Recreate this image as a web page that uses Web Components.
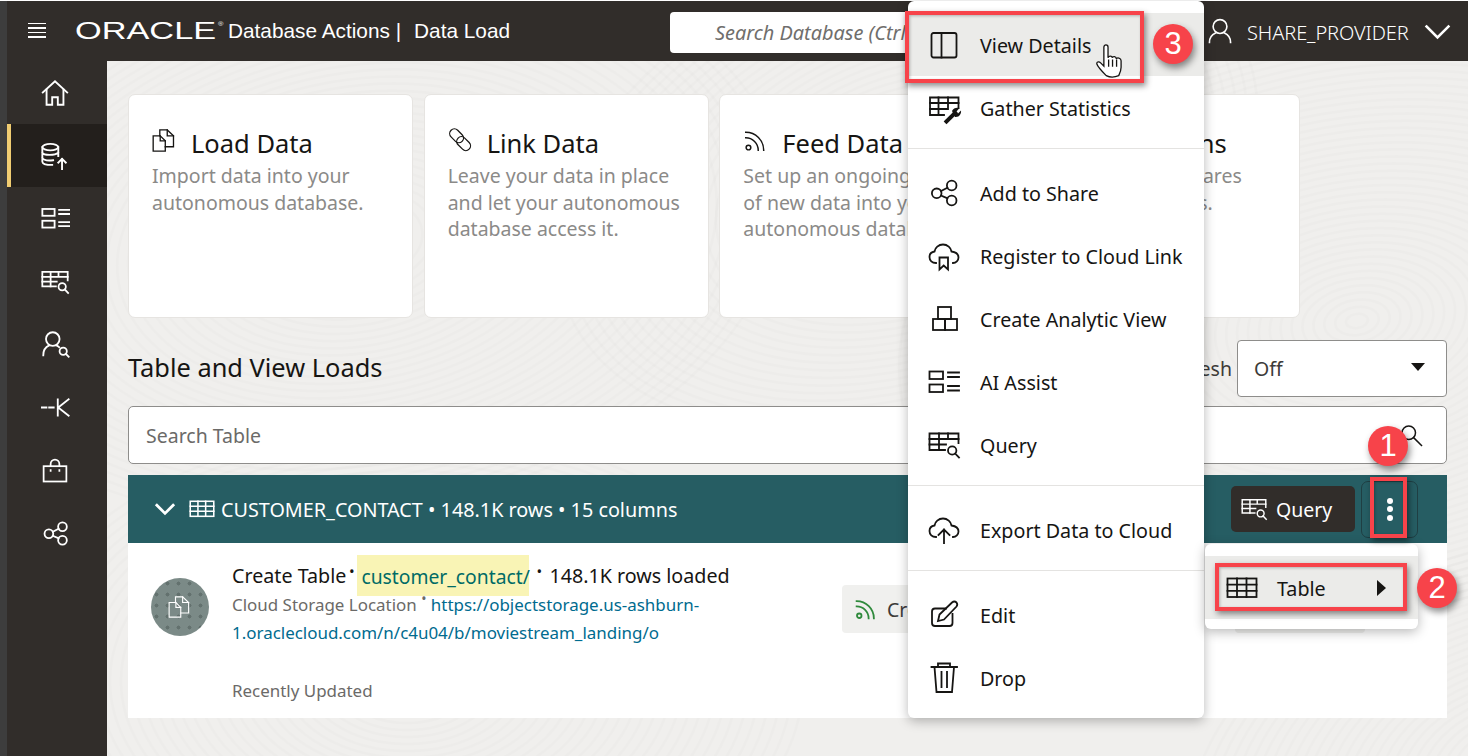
<!DOCTYPE html>
<html lang="en"><head><meta charset="utf-8"><title>Data Load</title>
<style>
html,body{margin:0;height:756px;overflow:hidden;background:#3d3d3d}
body{font-family:"Noto Sans","Open Sans",sans-serif;color:#161513}
</style></head>
<body>
<app-shell></app-shell>
<script>
const CLOUD='M8 23C4 23 1.5 20.5 1.5 17C1.5 14 3.5 12 6.5 11.5C7 8 10.5 4.5 15 4.5C19.5 4.5 23 8 23.5 11.5C27 12 30.5 14 30.5 17.5C30.5 20.5 28 23 25 23';
const ICONS={
 details:'<rect x="3.5" y="4" width="25" height="24.5" rx="2"/><path d="M13.5 4V28.5"/>',
 gather:'<path d="M16 23H2V5.5H30.5V16"/><path d="M2 11H30.5M2 17H20M10.5 5.5V23M20 5.5V17"/><path d="M18.500 29.500L27 21" stroke-width="4"/><path d="M24 19C25 16 29 15 31.500 16L28.500 19.500L30 21.500L33 18.500C33.500 21.500 31.500 25.500 27 25Z" fill="currentColor" stroke="none"/>',
 share:'<circle cx="8.7" cy="16.3" r="4.8"/><circle cx="23.7" cy="8.5" r="4.8"/><circle cx="23.7" cy="23.5" r="4.8"/><path d="M13 14L19.4 10.7M13 18.6L19.4 21.3"/>',
 cloudlink:'<path d="'+CLOUD+'"/><path d="M11.5 17.5H20V29.5L15.7 25.5L11.5 29.5Z"/>',
 analytic:'<rect x="10" y="4" width="13" height="12"/><rect x="5" y="16" width="12" height="11"/><rect x="17" y="16" width="12" height="11"/>',
 ai:'<rect x="1.5" y="5.5" width="13.5" height="7.5"/><rect x="1.5" y="18.5" width="13.5" height="7.5"/><path d="M20 6.5H31M20 11H31M20 20H31M20 24.5H31"/>',
 query:'<path d="M17 21H1.5V4.5H30.5V14"/><path d="M1.5 10H30.5M1.5 15.5H18M11 4.5V21M20 4.5V10"/><circle cx="24.2" cy="21.5" r="4.2"/><path d="M27.2 24.5L31 28.5"/>',
 cloudup:'<path d="'+CLOUD+'"/><path d="M16 29V15.5M10.5 21L16 15.5L21.5 21"/>',
 edit:'<path d="M18 9.5H7A3 3 0 0 0 4 12.5V24A3 3 0 0 0 7 27H21.500A3 3 0 0 0 24.500 24V15"/><path d="M10 22L11.500 15.500L24 3.500C25.500 2.200 27.500 2.500 28.500 3.500C29.500 4.800 29.500 6.200 28.500 7.500L16 20.500Z"/>',
 trash:'<path d="M3.500 5H29M10 5V1.500H22V5M6.500 5L8.500 30H24L26 5M13.500 10V25M19 10V25"/>',
 home:'<path d="M3 15.500L16 3.500L29 15.500"/><path d="M7 12.500V28.500H13V20.500H19V28.500H25V12.500"/>',
 db:'<ellipse cx="11" cy="6.500" rx="8.500" ry="3.500"/><path d="M2.500 6.500V22C2.500 24.500 7 25.500 13 25.500M19.500 6.500V16M2.500 12.500C4 15.500 16 15.500 19.500 12.500M2.500 18C4 21 10 21 14 20.500"/><path d="M23.500 30V19M19.500 23L23.500 19L27.500 23" stroke="#fff"/>',
 usersearch:'<circle cx="13" cy="10" r="7.500"/><path d="M2.500 28C2.500 22 5.500 18.500 9 17M17 17C18 17.500 19 18 20 19"/><circle cx="24.500" cy="23.500" r="4"/><path d="M27.500 26.500L30.500 29.500"/>',
 dashk:'<path d="M1 16H6M9 16H14M18.500 7V25M30.500 7L19 16L30.500 25"/>',
 bag:'<rect x="3" y="10.500" width="26" height="17.500"/><path d="M11 10.500V8A5 5 0 0 1 21 8V10.500"/><path d="M11 15V15.800M21 15V15.800"/>',
 doc:'<path d="M1.500 10H10.500L17 16.500V29.500H1.500Z"/><path d="M10 10V2.500H19.500L27.500 10V24H17"/><path d="M10.500 10V16.500H17M19.500 2.500V10H27.500"/>',
 link:'<rect x="-10" y="-6" width="20" height="12" rx="6" transform="translate(11 10) rotate(45)"/><rect x="-10" y="-6" width="20" height="12" rx="6" transform="translate(20 20) rotate(45)"/>',
 feed:'<path d="M3.500 5.500A23 23 0 0 1 26.500 28.500M3.500 12.500A16 16 0 0 1 19.500 28.500"/><circle cx="7" cy="25" r="3"/>',
 table:'<rect x="1.500" y="6.500" width="29" height="18.500"/><path d="M1.500 12.700H30.500M1.500 18.800H30.500M11 6.500V25M20.500 6.500V25"/>',
 user:'<circle cx="16" cy="10.500" r="8.500"/><path d="M3 30C3 24 6 20.500 10.500 18.500M29 30C29 24 26 20.500 21.500 18.500"/>',
 search:'<circle cx="13" cy="13" r="9"/><path d="M19.500 19.500L30 30"/>',
 chevron:'<path d="M3 10L16 23L29 10"/>',
 hand:'<path d="M12 30C9 27 5 23 4 20C4 18 6 18 7.500 19.500L10 22V6C10 3.500 13.500 3.500 13.500 6V15C14 13 17 13 17 15C17.500 13.500 20.500 13.500 20.500 16C21 14.500 24.500 15 24.500 17.500V23C24.500 26 23.500 28 22.500 30C19 31.500 15 31.500 12 30Z" fill="#fff"/><path d="M14 17V22M17.300 17V22M20.700 17V22"/>'
};
class XIcon extends HTMLElement{
 connectedCallback(){
  const s=this.getAttribute('size')||32,w=this.getAttribute('sw')||1.8;
  this.attachShadow({mode:'open'}).innerHTML=`<style>:host{display:inline-flex;flex:none;width:${s}px;height:${s}px}svg{display:block;overflow:visible}</style><svg width="${s}" height="${s}" viewBox="0 0 32 32" fill="none" stroke="currentColor" stroke-width="${w}" stroke-linecap="square">${ICONS[this.getAttribute('name')]||''}</svg>`;
 }
}
customElements.define('x-icon',XIcon);

function def(name,html){
 const t=document.createElement('template');t.innerHTML=html;
 customElements.define(name,class extends HTMLElement{
  constructor(){super();this.attachShadow({mode:'open'}).appendChild(t.content.cloneNode(true));}
 });
}

/* soft swirling paper texture of the workspace, as vector ellipses */
let swirl='';
[[250,180,13],[800,120,11],[1250,260,14],[300,620,12],[1400,700,10]].forEach(([x,y,n])=>{
 for(let i=1;i<=n*3;i++){swirl+=`<ellipse cx='${x}' cy='${y}' rx='${i*11}' ry='${i*7}' fill='none' stroke='%23000' stroke-opacity='.011' stroke-width='3' transform='rotate(${x%40-20} ${x} ${y})'/>`;}
});
const SWIRL=`url("data:image/svg+xml,<svg xmlns='http://www.w3.org/2000/svg' width='1361' height='696'>${swirl}</svg>")`;

def('app-header',`<style>
:host{display:flex;align-items:center;height:60px;background:#312d2a;color:#fff;flex:none;font-family:"Liberation Sans",sans-serif}
.burger{width:18px;height:15px;margin-left:21px;margin-top:-2px;display:flex;flex-direction:column;justify-content:space-between}
.burger i{display:block;height:1.500px;background:#fff}
.logo{margin-left:29px;width:139px;height:24px;font-size:23.500px;line-height:24px;transform:scaleX(1.46);transform-origin:0 50%;white-space:nowrap;position:relative;margin-top:-1px}
.r{position:absolute;left:98px;top:1px;font-size:5px;line-height:8px;}
.t{font-size:20.800px;white-space:nowrap;margin-top:-1px}
.t1{margin-left:14px;margin-right:13px}
.search{margin-left:160px;height:41px;background:#fff;border-radius:4px;color:#6f6e6c;font:italic 19.900px "Noto Sans",sans-serif;display:flex;align-items:center;padding-left:45px;flex:none;white-space:nowrap;overflow:hidden;width:400px;margin-top:3px}
.right{position:absolute;left:1205px;top:1px;height:60px;display:flex;align-items:center;font:300 20px "Noto Sans",sans-serif}
.u{margin-left:2px}.n{margin-left:14px;width:177px;letter-spacing:-.1px;padding-top:2px}
</style>
<div class="burger"><i></i><i></i><i></i><i></i></div>
<div class="logo">ORACLE<span class="r">®</span></div>
<div class="t t1">Database Actions |</div><div class="t">Data Load</div>
<div class="search">Search Database (Ctrl+K)</div>
<div class="right"><x-icon class="u" name="user" size="26" sw="2"></x-icon><span class="n">SHARE_PROVIDER</span><x-icon name="chevron" size="27" sw="3"></x-icon></div>`);

def('side-nav',`<style>
:host{display:flex;flex-direction:column;width:100px;background:#312d2a;color:#fff;flex:none;box-sizing:border-box}
</style><slot></slot>`);
def('nav-item',`<style>
:host{display:flex;height:63px;align-items:center;justify-content:center;box-sizing:border-box;color:#fff;padding-right:4px}
:host([active]){background:#231f1c;border-left:4px solid #f0cc71;padding-right:8px}
</style><slot></slot>`);

def('feature-card',`<style>
:host{display:block;width:285px;height:224px;box-sizing:border-box;background:#fff;border:1px solid #e6e4e1;border-radius:7px;padding:30px 20px 0 23px;flex:none}
.h{display:flex;align-items:center;height:36px;font-size:25.500px;color:#161513;gap:14px;white-space:nowrap}
.d{font-size:19.500px;line-height:26.500px;color:#8b8a88;white-space:nowrap;padding-top:2px}
::slotted(x-icon){margin-bottom:5px}
</style><div class="h"><slot name="icon"></slot><slot name="title"></slot></div><div class="d"><slot></slot></div>`);

def('section-head',`<style>
:host{display:flex;align-items:center;justify-content:space-between;height:57px;margin-top:22px}
.t{font-size:25.400px;margin-top:-4px}
.r{display:flex;align-items:center;gap:5px;font-size:19.500px;color:#3d3b39}
.sel{height:55px;border:1px solid #8e8d8b;border-radius:4px;background:#fff;display:flex;align-items:center;justify-content:space-between;padding:0 21px 0 16px;width:171px}
.sel i{border:7.500px solid transparent;border-top:8px solid #161513;border-bottom:0;margin-top:-4px}
</style><div class="t">Table and View Loads</div><div class="r">Auto Refresh<div class="sel">Off<i></i></div></div>`);

def('search-box',`<style>
:host{display:flex;align-items:center;justify-content:space-between;height:58px;box-sizing:border-box;margin-top:9px;background:#fff;border:1px solid #8e8d8b;border-radius:5px;padding:0 23px 0 17px;font-size:19.500px;color:#6b6a68}
x-icon{color:#161513}
</style>Search Table<x-icon name="search" size="24" sw="2"></x-icon>`);

def('table-bar',`<style>
:host{display:flex;align-items:center;height:68px;margin-top:11px;background:#265d63;color:#fff;font-size:19.800px;padding-left:27px;flex:none}
.c{margin-right:14px}.i{margin-right:6px}
.q{margin-left:auto;width:124px;height:46px;background:#312d2a;border-radius:5px;display:flex;align-items:center;padding-left:10px;box-sizing:border-box;gap:9px;font-size:19.500px}
.k{margin-left:6px;margin-right:29px;width:57px;height:57px;box-sizing:border-box;border:1px solid #1f3f43;border-radius:7px;display:flex;flex-direction:column;align-items:center;justify-content:center;gap:2.500px}
.k i{width:6px;height:6px;border-radius:50%;background:#fff}
</style><x-icon class="c" name="chevron" size="20" sw="4.500"></x-icon><x-icon class="i" name="table" size="26" sw="1.900"></x-icon><span>CUSTOMER_CONTACT • 148.1K rows • 15 columns</span>
<div class="q"><x-icon name="query" size="26" sw="1.800"></x-icon>Query</div><div class="k"><i></i><i></i><i></i></div>`);

def('load-row',`<style>
:host{display:flex;flex:none;height:175px;background:#fff;padding-left:23px;box-sizing:border-box;position:relative}
.av{width:58px;height:58px;border-radius:50%;margin-top:35px;background:#7b8a87 radial-gradient(circle,#63716e 1.800px,transparent 2.200px) 0 0/11px 11px;color:#fff;display:flex;align-items:center;justify-content:center;flex:none}
.txt{margin-left:23px;width:580px;padding-top:17px}
.a{display:flex;align-items:center;font-size:19.700px;line-height:32px;height:32px;white-space:nowrap;color:#161513}
.a b{font-weight:400;font-size:15px;line-height:15px;margin-bottom:10px;text-align:center}
mark{background:#f9f4b5;color:#006b66;display:block;box-sizing:border-box;padding-left:4px;width:172px;height:41px;line-height:43px;margin-top:-2px;flex:none;font-size:19.300px}
.b{font-size:16.950px;line-height:28px;color:#6b6a68;margin-top:-1px;white-space:nowrap}
.b a{color:#006b8f;text-decoration:none}
.b sup{font-size:14px;line-height:0}
.u{margin-top:30px;font-size:16.950px;color:#6b6a68;line-height:28px}
.btn{position:absolute;top:42px;height:48px;background:#f0f0ee;border-radius:4px;display:flex;align-items:center;gap:9px;padding-left:12px;box-sizing:border-box;font-size:19.500px;color:#3d3b39;white-space:nowrap}
.b1{left:714px;width:130px}.b2{left:1107px;width:130px}
</style>
<div class="av"><x-icon name="doc" size="24" sw="1.500"></x-icon></div>
<div class="txt">
<div class="a"><span>Create Table</span><b style="width:11px">•</b><mark>customer_contact/</mark><b style="width:20px">•</b><span>148.1K rows loaded</span></div>
<div class="b">Cloud Storage Location <sup>•</sup> <a>https://objectstorage.us-ashburn-</a><br><a>1.oraclecloud.com/n/c4u04/b/moviestream_landing/o</a></div>
<div class="u">Recently Updated</div></div>
<div class="btn b1"><x-icon name="feed" size="24" style="color:#2f8a3c" sw="2.400"></x-icon>Create</div>
<div class="btn b2"></div>`);

def('menu-item',`<style>
:host{display:flex;align-items:center;height:63px;padding-left:20px;gap:20px;font-size:19.700px;color:#161513;white-space:nowrap}
:host([hot]){background:#ebebe9}
span{padding-top:2px}
</style><slot name="icon"></slot><span><slot></slot></span>`);
def('menu-sep',`<style>:host{display:block;height:1px;background:#e4e3e1;margin:9px 0 12px}</style>`);
def('pop-menu',`<style>
:host{display:block;position:absolute;background:#fff;border-radius:6px;box-shadow:0 3px 12px rgba(0,0,0,.28);box-sizing:border-box}
</style><slot></slot>`);
def('call-out',`<style>
:host{display:flex;position:absolute;width:40px;height:40px;border-radius:50%;background:#f7434a;color:#fff;align-items:center;justify-content:center;font:31px "Liberation Sans",sans-serif;box-shadow:2px 4px 7px rgba(0,0,0,.45)}
</style><slot></slot>`);
def('red-frame',`<style>
:host{display:block;position:absolute;border:4px solid #f7434a;box-sizing:border-box;box-shadow:2px 3px 6px rgba(0,0,0,.45),inset 1px 1px 3px rgba(0,0,0,.25)}
</style>`);

def('app-shell',`<style>
:host{display:block;position:relative;width:1468px;height:756px;overflow:hidden;box-sizing:border-box;padding:1px 0 0 7px;background:linear-gradient(#fff 1px,#3d3d3d 1px)}
.wrap{display:flex;flex-direction:column;height:755px}
.body{display:flex;flex:1;min-height:0}
main{flex:1;min-width:0;padding:33px 21px 0;box-sizing:border-box;display:flex;flex-direction:column;background:var(--swirl) 0 0 no-repeat,#f0efed}
.cards{display:flex;gap:10.670px}
.hand{position:absolute;left:1092px;top:40px;color:#161513}
</style>
<div class="wrap"><app-header></app-header><div class="body">
<side-nav>
 <nav-item><x-icon name="home" size="30" sw="2"></x-icon></nav-item>
 <nav-item active><x-icon name="db" size="30" sw="2"></x-icon></nav-item>
 <nav-item><x-icon name="ai" size="29" sw="2"></x-icon></nav-item>
 <nav-item><x-icon name="query" size="28" sw="2"></x-icon></nav-item>
 <nav-item><x-icon name="usersearch" size="29" sw="2"></x-icon></nav-item>
 <nav-item><x-icon name="dashk" size="29" sw="2"></x-icon></nav-item>
 <nav-item><x-icon name="bag" size="28" sw="2"></x-icon></nav-item>
 <nav-item><x-icon name="share" size="29" sw="2"></x-icon></nav-item>
</side-nav>
<main>
 <div class="cards">
  <feature-card><x-icon slot="icon" name="doc" size="25" sw="1.700"></x-icon><span slot="title">Load Data</span>Import data into your<br>autonomous database.</feature-card>
  <feature-card><x-icon slot="icon" name="link" size="25" sw="1.600"></x-icon><span slot="title">Link Data</span>Leave your data in place<br>and let your autonomous<br>database access it.</feature-card>
  <feature-card><x-icon slot="icon" name="feed" size="25" sw="1.900"></x-icon><span slot="title">Feed Data</span>Set up an ongoing feed<br>of new data into your<br>autonomous database.</feature-card>
  <feature-card><x-icon slot="icon" name="share" size="25" sw="1.700"></x-icon><span slot="title">Connections</span>Create and use shares<br>for all connections.</feature-card>
 </div>
 <section-head></section-head>
 <search-box></search-box>
 <table-bar></table-bar>
 <load-row></load-row>
</main></div></div>
<pop-menu style="left:908px;top:1px;width:296px;height:717px;padding-top:12px">
 <menu-item hot><x-icon slot="icon" name="details"></x-icon>View Details</menu-item>
 <menu-item><x-icon slot="icon" name="gather"></x-icon>Gather Statistics</menu-item>
 <menu-sep></menu-sep>
 <menu-item><x-icon slot="icon" name="share"></x-icon>Add to Share</menu-item>
 <menu-item><x-icon slot="icon" name="cloudlink"></x-icon>Register to Cloud Link</menu-item>
 <menu-item><x-icon slot="icon" name="analytic"></x-icon>Create Analytic View</menu-item>
 <menu-item><x-icon slot="icon" name="ai"></x-icon>AI Assist</menu-item>
 <menu-item><x-icon slot="icon" name="query"></x-icon>Query</menu-item>
 <menu-sep></menu-sep>
 <menu-item><x-icon slot="icon" name="cloudup"></x-icon>Export Data to Cloud</menu-item>
 <menu-sep></menu-sep>
 <menu-item><x-icon slot="icon" name="edit"></x-icon>Edit</menu-item>
 <menu-item><x-icon slot="icon" name="trash"></x-icon>Drop</menu-item>
</pop-menu>
<pop-menu style="left:1205px;top:544px;width:213px;height:85px;padding-top:12px">
 <menu-item hot style="gap:19px;position:relative"><x-icon slot="icon" name="table" style="margin-left:1px"></x-icon>Table<span style="position:absolute;left:172px;top:24px;width:0;height:0;border-left:9px solid #161513;border-top:8px solid transparent;border-bottom:8px solid transparent"></span></menu-item>
</pop-menu>
<red-frame style="left:905px;top:11px;width:239px;height:72px"></red-frame>
<red-frame style="left:1370px;top:477px;width:37px;height:61px"></red-frame>
<red-frame style="left:1215px;top:563px;width:192px;height:48px"></red-frame>
<call-out style="left:1153px;top:24px">3</call-out>
<call-out style="left:1368px;top:426px">1</call-out>
<call-out style="left:1417px;top:568px">2</call-out>
<x-icon class="hand" name="hand" size="38" sw="1.100"></x-icon>`);
document.querySelector('app-shell').style.setProperty('--swirl',SWIRL);
</script>
</body></html>
